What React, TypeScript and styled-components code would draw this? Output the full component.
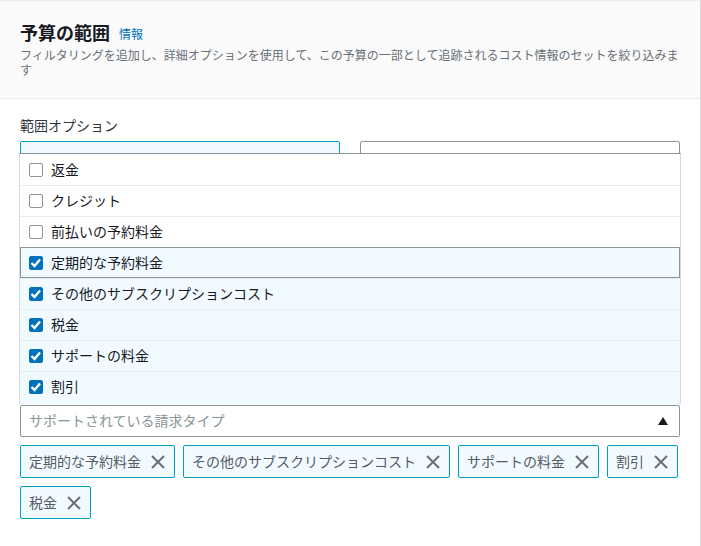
import styled, { createGlobalStyle } from 'styled-components'

const OPTIONS = [
  { label: '返金', checked: false },
  { label: 'クレジット', checked: false },
  { label: '前払いの予約料金', checked: false },
  { label: '定期的な予約料金', checked: true, focused: true },
  { label: 'その他のサブスクリプションコスト', checked: true },
  { label: '税金', checked: true },
  { label: 'サポートの料金', checked: true },
  { label: '割引', checked: true },
]

const TOKENS = ['定期的な予約料金', 'その他のサブスクリプションコスト', 'サポートの料金', '割引', '税金']

const GlobalStyle = createGlobalStyle`
  html, body {
    margin: 0;
    padding: 0;
    background: #fff;
  }
  body {
    font-family: "Noto Sans CJK JP", "Noto Sans", sans-serif;
    color: #16191f;
  }
`

const Panel = styled.div`
  width: 701px;
  height: 546px;
  box-sizing: border-box;
  border-top: 1px solid #eaeded;
  border-right: 1px solid #d5dbdb;
  overflow: hidden;
`

const Header = styled.div`
  height: 98px;
  box-sizing: border-box;
  padding: 16px 20px 0;
  background: #fafafa;
  border-bottom: 1px solid #eaeded;
`

const TitleRow = styled.div`
  display: flex;
  align-items: center;
  gap: 9px;
  line-height: 26px;
`

const Title = styled.h2`
  margin: 0;
  font-size: 18px;
  font-weight: 700;
`

const InfoLink = styled.a`
  font-size: 12px;
  margin-top: 4px;
  color: #0073bb;
`

const Description = styled.p`
  margin: 0;
  font-size: 12px;
  line-height: 15px;
  color: #687078;
`

const Body = styled.div`
  padding: 15px 20px 0;
`

const FieldLabel = styled.div`
  font-size: 14px;
  line-height: 22px;
  margin-bottom: 5px;
  color: #30363d;
`

const Tiles = styled.div`
  display: grid;
  grid-template-columns: 320px 320px;
  gap: 20px;
  align-items: start;
  height: 264px;
`

const Tile = styled.div<{ $selected?: boolean }>`
  height: 40px;
  border: 1px solid ${p => (p.$selected ? '#00a1c9' : '#879596')};
  border-radius: 2px;
  background: ${p => (p.$selected ? '#f1faff' : '#fff')};
`

const SelectWrap = styled.div`
  position: relative;
`

const Dropdown = styled.ul`
  position: absolute;
  left: -1px;
  bottom: calc(100% + 1px);
  width: 662px;
  box-sizing: border-box;
  margin: 0;
  padding: 0;
  list-style: none;
  background: #fff;
  border-top: 1px solid #879596;
  border-left: 1px solid #d5dbdb;
  border-right: 1px solid #d5dbdb;
`

const Option = styled.li<{ $checked: boolean; $focused?: boolean }>`
  display: flex;
  align-items: center;
  gap: 8px;
  height: 31px;
  box-sizing: border-box;
  padding: 0 9px;
  font-size: 14px;
  border-top: 1px solid #eaeded;
  background: ${p => (p.$checked ? '#f1faff' : '#fff')};
  ${p => p.$focused && 'outline: 1px solid #879596; outline-offset: -1px; border-top: 0;'}
  &:first-child {
    border-top: 0;
  }
  &:last-child {
    height: 33px;
    padding-bottom: 2px;
  }
`

/* the CJK face sits about 1px low in its line box */
const Label = styled.span`
  margin-bottom: 2px;
`

const Box = styled.span<{ $checked: boolean }>`
  display: flex;
  align-items: center;
  justify-content: center;
  width: 14px;
  height: 14px;
  box-sizing: border-box;
  border-radius: 2px;
  flex-shrink: 0;
  background: ${p => (p.$checked ? '#0073bb' : '#fff')};
  border: 1px solid ${p => (p.$checked ? '#0073bb' : '#879596')};
`

const SelectBox = styled.div`
  display: flex;
  align-items: center;
  justify-content: space-between;
  height: 32px;
  box-sizing: border-box;
  padding: 0 11px 0 8px;
  background: #fff;
  border: 1px solid #879596;
  border-radius: 2px;
  font-size: 14px;
  color: #879596;
`

const Caret = styled.span`
  width: 0;
  height: 0;
  border-left: 5px solid transparent;
  border-right: 5px solid transparent;
  border-bottom: 8px solid #16191f;
`

const TokenList = styled.div`
  display: flex;
  flex-wrap: wrap;
  gap: 8px;
  margin-top: 8px;
`

const Token = styled.div`
  display: flex;
  align-items: center;
  gap: 9px;
  height: 33px;
  box-sizing: border-box;
  padding: 0 8px;
  background: #f1faff;
  border: 1px solid #00a1c9;
  border-radius: 2px;
  font-size: 14px;
  color: #545b64;
`

const CloseIcon = () => (
  <svg width="16" height="16" viewBox="0 0 16 16" fill="none" stroke="#687078" strokeWidth="2">
    <path d="M2 2l12 12M14 2L2 14" />
  </svg>
)

const CheckIcon = () => (
  <svg width="12" height="12" viewBox="0 0 12 12" fill="none" stroke="#fff" strokeWidth="2.4">
    <path d="M1.5 6l3 3 5.5-6.5" />
  </svg>
)

export default function App() {
  return (
    <Panel>
      <GlobalStyle />
      <Header>
        <TitleRow>
          <Title>予算の範囲</Title>
          <InfoLink>情報</InfoLink>
        </TitleRow>
        <Description>
          フィルタリングを追加し、詳細オプションを使用して、この予算の一部として追跡されるコスト情報のセットを絞り込みます
        </Description>
      </Header>
      <Body>
        <FieldLabel>範囲オプション</FieldLabel>
        <Tiles>
          <Tile $selected />
          <Tile />
        </Tiles>
        <SelectWrap>
          <Dropdown>
            {OPTIONS.map(o => (
              <Option key={o.label} $checked={o.checked} $focused={o.focused}>
                <Box $checked={o.checked}>{o.checked && <CheckIcon />}</Box>
                <Label>{o.label}</Label>
              </Option>
            ))}
          </Dropdown>
          <SelectBox>
            <Label>サポートされている請求タイプ</Label>
            <Caret />
          </SelectBox>
        </SelectWrap>
        <TokenList>
          {TOKENS.map(t => (
            <Token key={t}>
              <Label>{t}</Label>
              <CloseIcon />
            </Token>
          ))}
        </TokenList>
      </Body>
    </Panel>
  )
}
